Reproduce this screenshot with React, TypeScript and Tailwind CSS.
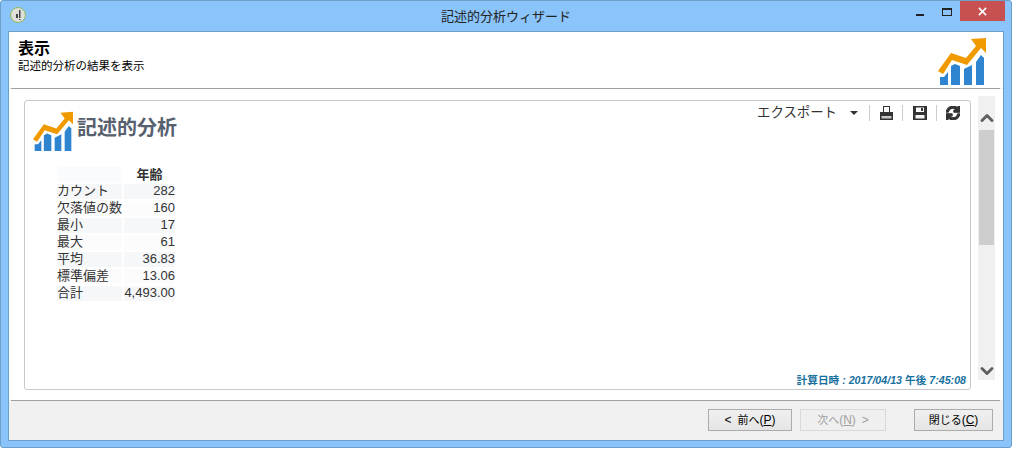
import { type JSX } from "react";
import { ChevronDown, ChevronUp } from "lucide-react";
import { FaSync } from "react-icons/fa";

const jp = "font-['Liberation_Sans','Noto_Sans_CJK_JP',sans-serif]";

const rows = [
	["カウント", "282"],
	["欠落値の数", "160"],
	["最小", "17"],
	["最大", "61"],
	["平均", "36.83"],
	["標準偏差", "13.06"],
	["合計", "4,493.00"],
];

function ChartLogo({ className }: { className: string }): JSX.Element {
	return (
		<svg viewBox="0 0 48 48" className={className}>
			<path d="M2 48V40L6 40L10 35V48Z" fill="#2f84d0" />
			<path d="M13 48V29L17 27L22 29V48Z" fill="#2f84d0" />
			<path d="M26 48V32L34 28V48Z" fill="#2f84d0" />
			<path d="M38 48V25L43 18L46 21V48Z" fill="#2f84d0" />
			<path d="M0 34L13 16L28 21L38 9L33 2L48 1V16L43 11L29 28L14 23L5 37Z" fill="#f09a00" />
		</svg>
	);
}

function PrintIcon(): JSX.Element {
	return (
		<svg viewBox="0 0 13 14" className="w-[13px] h-[14px]" fill="#333">
			<path d="M3 0H10V6H9V1H4V6H3Z" />
			<path d="M0 6H13V14H0Z" />
			<path d="M1.5 10H11.5V12.5H1.5Z" fill="#c8c8c8" />
		</svg>
	);
}

function SaveIcon(): JSX.Element {
	return (
		<svg viewBox="0 0 14 14" className="w-[14px] h-[14px]" fill="#333">
			<path d="M0 0H14V14H0Z" />
			<path d="M3 1.5H11V6H3Z" fill="#fff" />
			<path d="M8 2H10V5H8Z" />
			<path d="M2.5 9H11.5V12.5H2.5Z" fill="#f4f4f4" />
		</svg>
	);
}

function Separator(): JSX.Element {
	return <div className="w-[1px] h-[16px] bg-[#ccc]" />;
}

function FooterButton({ label, mnemonic, before, after, disabled = false, width }: {
	label: string;
	mnemonic: string;
	before?: string;
	after?: string;
	disabled?: boolean;
	width: string;
}): JSX.Element {
	return (
		<button
			className={`h-[22px] ${width} border text-[11px] leading-none flex items-center justify-center bg-linear-to-b ${
				disabled ? "border-[#d9d9d9] text-[#a0a0a0] from-[#efefef] to-[#efefef]" : "border-[#acacac] text-black from-[#f0f0f0] to-[#e5e5e5]"
			}`}
		>
			{before && <span className="text-[12px] mr-[6px]">{before}</span>}
			{label}
			<span className="text-[12px]">(<span className="underline">{mnemonic}</span>)</span>
			{after && <span className="text-[12px] ml-[6px]">{after}</span>}
		</button>
	);
}

export default function App(): JSX.Element {
	return (
		<div className={`w-[1028px] h-[464px] bg-white ${jp}`}>
			{/* ウィンドウ */}
			<div className="w-[1012px] h-[448px] bg-[#8ac4fa] border border-[#6c9fca] rounded-[3px] flex flex-col">
				{/* タイトルバー */}
				<div className="h-[30px] shrink-0 flex items-start relative">
					<svg viewBox="0 0 16 16" className="ml-[9px] mt-[6px] w-4 h-4">
						<circle cx="8" cy="8" r="7.5" fill="#dededa" stroke="#8fb85e" />
						<path d="M9 3H10.5V11H9ZM6 7H8V11H6ZM9 12H10.5V13H9Z" fill="#444" />
					</svg>
					<div className="absolute inset-x-0 top-[7px] text-center text-[13px] leading-[18px] text-[#222]">記述的分析ウィザード</div>
					<div className="ml-auto w-[8px] h-[2px] bg-[#222] mt-[13px]" />
					<div className="ml-[18px] mt-[7px] w-[10px] h-[8px] border border-[#222] border-t-2" />
					<div className="ml-[8px] mr-[6px] w-[45px] h-[20px] bg-[#c75050] flex items-center justify-center">
						<svg viewBox="0 0 10 10" className="w-[9px] h-[9px]" stroke="#fff" strokeWidth="1.8">
							<path d="M1 1L9 9M9 1L1 9" />
						</svg>
					</div>
				</div>

				{/* 本体 */}
				<div className="mx-[7px] h-[410px] bg-[#f0f0f0] border border-[#6c9fca] flex flex-col">
					<div className="h-[56px] shrink-0 bg-white px-[9px] pt-[6px] flex justify-between">
						<div>
							<div className="text-[16px] font-bold leading-[21px] text-black">表示</div>
							<div className="text-[11.5px] leading-[15px] text-black">記述的分析の結果を表示</div>
						</div>
						<ChartLogo className="w-[48px] h-[48px] mr-[8px] mt-[-1px]" />
					</div>
					<div className="h-[1px] ml-[2px] mr-[3px] bg-[#a0a0a0] shrink-0" />

					<div className="h-[311px] shrink-0 bg-white pl-[15px] pr-[8px] pt-[7px] flex gap-[7px]">
						{/* レポート */}
						<div className="w-[948px] h-[290px] mt-[4px] border border-[#c8c8c8] rounded-[3px] flex flex-col relative">
							<div className="flex items-start h-[66px] shrink-0">
								<ChartLogo className="w-[40px] h-[40px] ml-[8px] mt-[10px]" />
								<div className="ml-[4px] mt-[14px] text-[20px] font-bold leading-[26px] text-[#56606e]">記述的分析</div>
								<div className="ml-auto mt-[3px] flex items-center h-[18px] text-[13.4px] text-[#333]">
									<span>エクスポート</span>
									<div className="ml-[13px] mr-[11px] w-0 h-0 border-l-[4px] border-r-[4px] border-t-[4px] border-l-transparent border-r-transparent border-t-[#333]" />
									<Separator />
									<div className="w-[32px] flex justify-center"><PrintIcon /></div>
									<Separator />
									<div className="w-[33px] flex justify-center"><SaveIcon /></div>
									<Separator />
									<div className="w-[33px] flex justify-center pr-[9px] pl-[7px] text-[#333]">
										<FaSync className="w-[14px] h-[14px]" stroke="currentColor" strokeWidth={45} />
									</div>
								</div>
							</div>

							<div className="ml-[32px] w-[118px] grid grid-cols-[65px_51px] gap-x-[2px] gap-y-[2px] text-[13px] leading-[14px] text-[#333]">
								<div className="h-[15px] bg-[#fafbfc]" />
								<div className="h-[15px] text-center text-[13px] leading-[16px] font-bold">年齢</div>
								{rows.map(([name, value], i) => (
									<div key={name} className="contents">
										<div className={`h-[15px] whitespace-nowrap ${i % 2 === 0 ? "bg-[#f5f7f9]" : "bg-[#fcfcfd]"}`}>{name}</div>
										<div className={`h-[15px] text-right ${i % 2 === 0 ? "bg-[#f5f7f9]" : "bg-[#fcfcfd]"}`}>{value}</div>
									</div>
								))}
							</div>

							<div className="absolute right-[4px] bottom-[3px] text-[10.67px] font-bold leading-[12px] text-[#16709e]">
								計算日時<span className="italic"> : 2017/04/13 </span>午後<span className="italic"> 7:45:08</span>
							</div>
						</div>

						{/* スクロールバー */}
						<div className="w-[17px] h-[284px] bg-[#f0f0f0] flex flex-col items-center shrink-0">
							<div className="h-[34px] shrink-0 flex items-center justify-center pt-[10px]">
								<ChevronUp className="w-[20px] h-[20px] text-[#606060]" strokeWidth={3.5} />
							</div>
							<div className="w-[15px] h-[115px] bg-[#cdcdcd]" />
							<div className="mt-auto h-[17px] flex items-center justify-center mb-[1px]">
								<ChevronDown className="w-[20px] h-[20px] text-[#606060]" strokeWidth={3.5} />
							</div>
						</div>
					</div>

					<div className="h-[1px] ml-[2px] mr-[3px] bg-[#a0a0a0] shrink-0" />

					{/* フッター */}
					<div className="flex-1 flex items-start pt-[8px] pr-[10px]">
						<div className="ml-auto flex">
							<FooterButton label="前へ" mnemonic="P" before="<" width="w-[84px]" />
							<div className="ml-[8px]">
								<FooterButton label="次へ" mnemonic="N" after=">" disabled width="w-[86px]" />
							</div>
							<div className="ml-[28px]">
								<FooterButton label="閉じる" mnemonic="C" width="w-[79px]" />
							</div>
						</div>
					</div>
				</div>
			</div>
		</div>
	);
}
